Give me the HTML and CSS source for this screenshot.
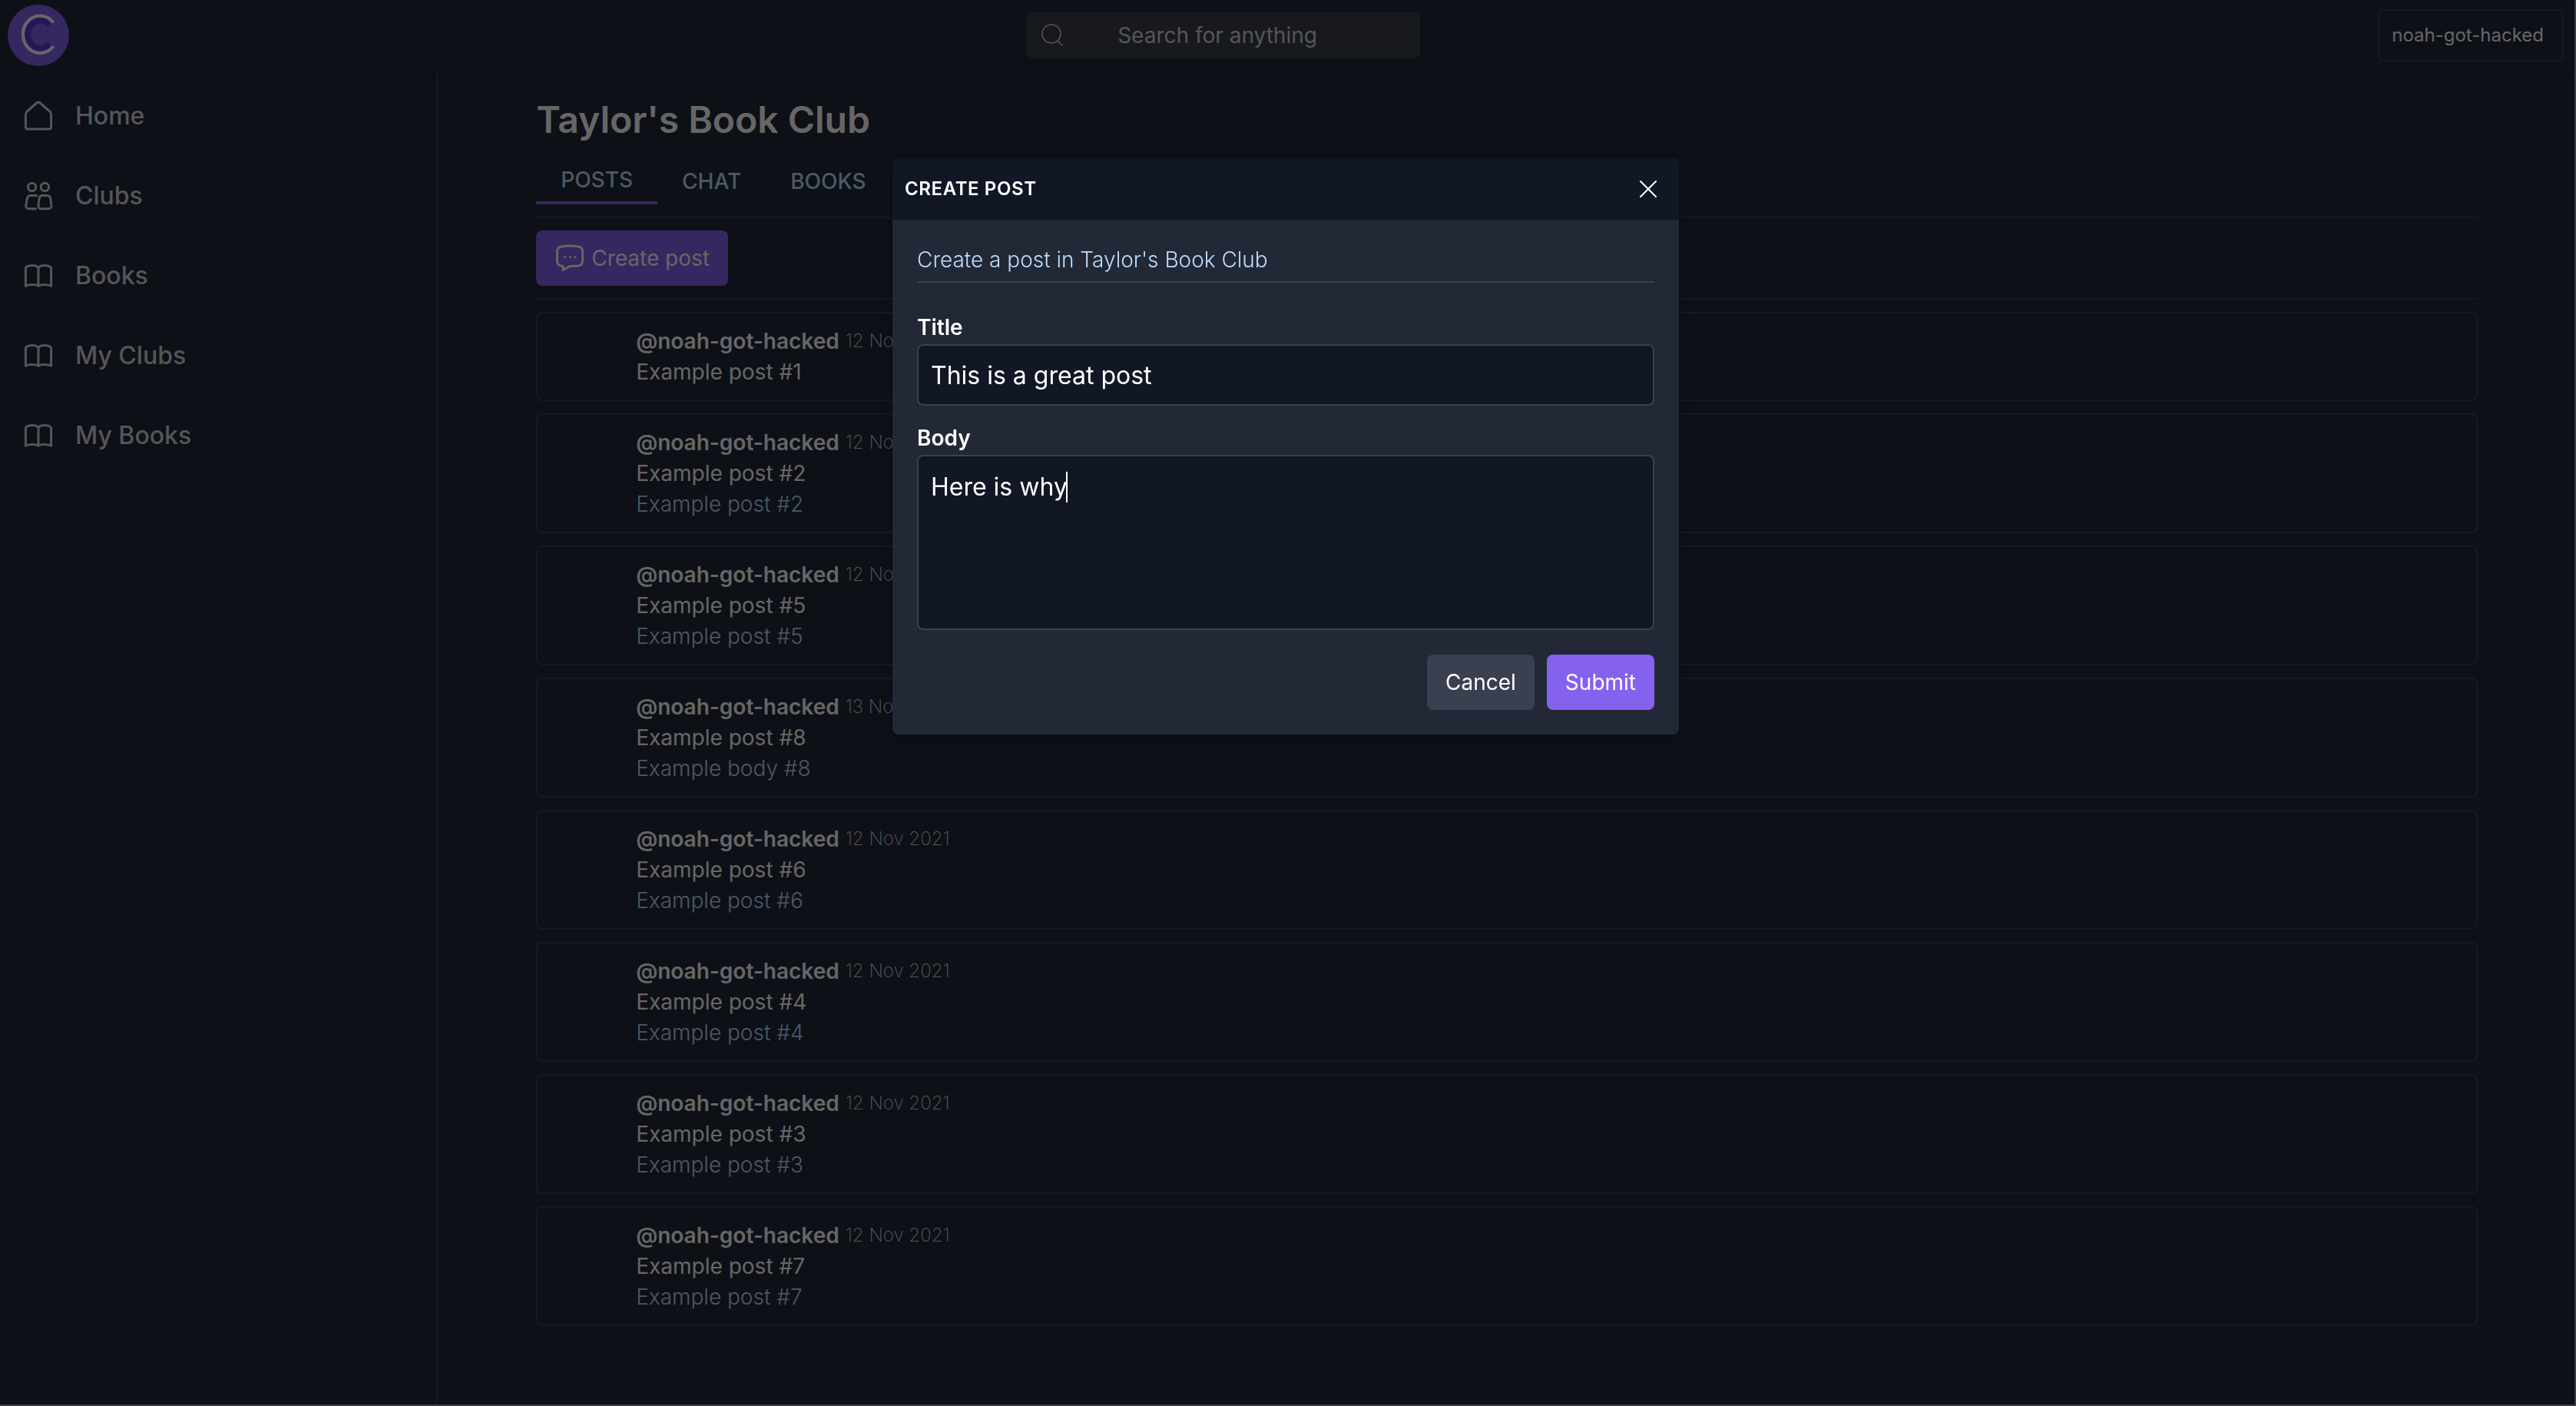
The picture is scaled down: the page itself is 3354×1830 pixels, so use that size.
FILE: index.html
```html
<!DOCTYPE html>
<html lang="en">
<head>
<meta charset="utf-8">
<title>Taylor's Book Club</title>
<link rel="stylesheet" href="styles.css">
</head>
<body>
<svg width="0" height="0" class="sprite" aria-hidden="true">
  <symbol id="i-book" viewBox="0 0 24 24"><path d="M12 6.600C11 5.600 9.600 5.200 8 5.200S3.700 5.800 3.700 7.200V18.600C5 18 6.400 17.800 8 17.800S11 18 12 18.600C13 18 14.400 17.800 16 17.800S19 18 20.300 18.600V7.200C20.300 5.800 17.600 5.200 16 5.200S13 5.600 12 6.600zM12 6.600V18.600"/></symbol>
</svg>
<div class="page">
  <header class="topbar">
    <a class="logo" href="#" aria-label="Club home">
      <svg viewBox="0 0 80 80"><circle cx="40" cy="40" r="40" fill="#8462ee" stroke="none"/><path d="M54.500 26.800A16.300 18.200 0 1 0 54.500 50.800" fill="none" stroke="#6932dc" stroke-width="8"/><path d="M59.500 23.500A22.300 24.200 0 1 0 59.500 54" fill="none" stroke="#fff" stroke-width="4.300"/></svg>
    </a>
    <label class="search">
      <svg viewBox="0 0 32 32"><circle cx="14" cy="14" r="12"/><path d="M22 23l6 6"/></svg>
      <input type="search" placeholder="Search for anything" aria-label="Search for anything">
    </label>
    <button class="user" type="button">noah-got-hacked</button>
  </header>
  <div class="columns">
    <nav class="sidebar">
      <a href="#"><svg viewBox="0 0 24 24"><path d="M3.700 11.100c0-.9.300-1.500.9-2.100L10.900 3.500c.6-.6 1.600-.6 2.200 0L19.400 9c.6.6.9 1.200.9 2.100v8c0 .8-.6 1.400-1.400 1.400H5.100c-.8 0-1.400-.6-1.400-1.400z"/></svg>Home</a>
      <a href="#"><svg viewBox="0 0 24 24"><circle cx="7.800" cy="6.200" r="2.600"/><circle cx="16.200" cy="6.200" r="2.600"/><path d="M10.800 11.800H7c-1.300 0-2.200.8-2.400 2.100L3.900 18.200c-.2 1.300.6 2.200 1.900 2.200H10.200M14.600 11.800h3.200c1.200 0 1.900.7 2.100 1.900l.5 4.500c.1 1.300-.5 2.200-1.800 2.200h-4.800c-1.300 0-1.900-.9-1.800-2.200l.5-4.500c.2-1.200.9-1.900 2.100-1.900z"/></svg>Clubs</a>
      <a href="#"><svg><use href="#i-book"/></svg>Books</a>
      <a href="#"><svg><use href="#i-book"/></svg>My Clubs</a>
      <a href="#"><svg><use href="#i-book"/></svg>My Books</a>
    </nav>
    <main class="content">
      <h1>Taylor's Book Club</h1>
      <nav class="tabs">
        <a class="active" href="#">POSTS</a>
        <a href="#">CHAT</a>
        <a href="#">BOOKS</a>
      </nav>
      <div class="toolbar">
        <button class="btn create" type="button">
          <svg viewBox="0 0 40 40"><path d="M8.500 5Q20 3 31.500 5Q36.500 6 36.500 11v13Q36.500 29 31 30Q24 30 20 30.500Q15 33 11 35.500V30.500Q3.500 30 3.500 24V11Q3.500 6 8.500 5z"/><path d="M13.500 18.500h.1M20.500 18.500h.1M27 18.500h.1"/></svg>
          Create post
        </button>
      </div>
      <section class="posts">
        <article class="post"><p class="by"><b>@noah-got-hacked</b> <time>12 Nov 2021</time></p><h2>Example post #1</h2></article>
        <article class="post"><p class="by"><b>@noah-got-hacked</b> <time>12 Nov 2021</time></p><h2>Example post #2</h2><p class="text">Example post #2</p></article>
        <article class="post"><p class="by"><b>@noah-got-hacked</b> <time>12 Nov 2021</time></p><h2>Example post #5</h2><p class="text">Example post #5</p></article>
        <article class="post"><p class="by"><b>@noah-got-hacked</b> <time>13 Nov 2021</time></p><h2>Example post #8</h2><p class="text">Example body #8</p></article>
        <article class="post"><p class="by"><b>@noah-got-hacked</b> <time>12 Nov 2021</time></p><h2>Example post #6</h2><p class="text">Example post #6</p></article>
        <article class="post"><p class="by"><b>@noah-got-hacked</b> <time>12 Nov 2021</time></p><h2>Example post #4</h2><p class="text">Example post #4</p></article>
        <article class="post"><p class="by"><b>@noah-got-hacked</b> <time>12 Nov 2021</time></p><h2>Example post #3</h2><p class="text">Example post #3</p></article>
        <article class="post"><p class="by"><b>@noah-got-hacked</b> <time>12 Nov 2021</time></p><h2>Example post #7</h2><p class="text">Example post #7</p></article>
      </section>
    </main>
  </div>
</div>
<div class="backdrop">
  <div class="modal" role="dialog" aria-labelledby="modal-title">
    <div class="modal-head">
      <h2 id="modal-title">CREATE POST</h2>
      <button class="close" type="button" aria-label="Close"><svg viewBox="0 0 48 48"><path d="M14 14l20 20M34 14L14 34"/></svg></button>
    </div>
    <form class="modal-body">
      <p class="intro">Create a post in Taylor's Book Club</p>
      <div class="field">
        <label for="title">Title</label>
        <input id="title" type="text" value="This is a great post">
      </div>
      <div class="field">
        <label for="body">Body</label>
        <div class="editor"><textarea id="body">Here is why</textarea><span class="caret"></span></div>
      </div>
      <div class="actions">
        <button class="btn cancel" type="button">Cancel</button>
        <button class="btn submit" type="submit">Submit</button>
      </div>
    </form>
  </div>
</div>
</body>
</html>
```
FILE: styles.css
```css
* { box-sizing: border-box; margin: 0; }

:root {
  --deep: #111725;
  --page: #212839;
  --surface: #222835;
  --line: #3a404f;
  --accent: #8462ee;
  --soft: #d1d5db;
  --blue: #bfdbfe;
}

body {
  background: var(--page);
  color: #fff;
  font: 400 28px/40px Inter, "Liberation Sans", sans-serif;
}

button, input, textarea { font: inherit; color: inherit; }
button { cursor: pointer; }
a { color: inherit; text-decoration: none; }
svg { display: block; flex: none; fill: none; stroke: currentColor; stroke-linecap: round; stroke-linejoin: round; }
.sprite { position: absolute; }

.page { display: flex; flex-direction: column; min-height: 100vh; }

.topbar {
  position: relative;
  display: flex;
  align-items: center;
  justify-content: space-between;
  padding: 6px 16px 6px 10px;
  border-bottom: 2px solid var(--page);
  box-shadow: 0 2px 6px rgba(0, 0, 0, .1);
}
.logo svg { width: 80px; height: 80px; stroke-linecap: butt; }

.search {
  display: flex;
  align-items: center;
  width: 512px;
  height: 60px;
  padding-left: 18px;
  border-radius: 8px;
  background: var(--line);
  color: var(--soft);
}
.search svg { width: 32px; height: 32px; stroke-width: 1.5; }
.search input {
  flex: 1;
  min-width: 0;
  padding: 0 0 0 68px;
  border: 0;
  outline: 0;
  background: none;
}
.search input::placeholder { color: inherit; opacity: 1; }

.user {
  height: 68px;
  padding: 0 24px 0 16px;
  border: 2px solid var(--line);
  border-radius: 8px;
  background: none;
  font-size: 24px;
}

.columns { display: flex; flex: 1; }

.sidebar {
  width: 17%;
  padding-top: 5px;
  border-right: 2px solid var(--line);
  color: var(--soft);
  font-size: 32px;
  font-weight: 500;
}
.sidebar a { display: flex; align-items: center; gap: 24px; height: 104px; padding-left: 26px; }
.sidebar svg { width: 48px; height: 48px; stroke-width: 1.5; }

.content { flex: 1; padding: 30px 128px 32px; }
h1 { font-size: 48px; line-height: 64px; font-weight: 600; margin-bottom: 18px; }

.tabs {
  display: flex;
  align-items: center;
  padding-bottom: 16px;
  border-bottom: 2px solid var(--line);
  color: var(--blue);
  font-weight: 500;
}
.tabs a { padding: 8px 32px; }
.tabs .active { border-bottom: 4px solid var(--accent); }

.toolbar { padding: 16px 0; border-bottom: 2px solid var(--line); }

.btn { height: 72px; padding: 0 24px; border: 0; border-radius: 8px; }
.create { display: flex; align-items: center; gap: 8px; background: var(--accent); }
.create svg { width: 40px; height: 40px; stroke-width: 3; }

.posts { display: flex; flex-direction: column; gap: 16px; padding-top: 16px; }
.post { padding: 16px 16px 16px 128px; border: 2px solid var(--line); border-radius: 8px; }
.post h2 { font-size: 28px; font-weight: 400; }
.by { display: flex; align-items: center; gap: 8px; }
.by b { font-weight: 600; }
.by time { color: var(--soft); font-size: 24px; font-weight: 200; }
.text { color: var(--blue); font-weight: 300; }

.backdrop {
  position: fixed;
  inset: 0;
  padding: 206px 4px 0 0;
  background: rgba(0, 0, 0, .6);
  border-right: 2px solid #3a3c42;
  border-bottom: 2px solid #3a3c42;
}
.modal {
  width: 1024px;
  margin: 0 auto;
  border-radius: 8px;
  background: var(--surface);
  box-shadow: 0 8px 24px rgba(0, 0, 0, .2);
}
.modal-head {
  display: flex;
  align-items: center;
  justify-content: space-between;
  height: 80px;
  padding: 0 16px;
  border-radius: 8px 8px 0 0;
  background: var(--deep);
}
.modal-head h2 { font-size: 24px; font-weight: 600; letter-spacing: .025em; }
.close { padding: 0; border: 0; background: none; }
.close svg { width: 48px; height: 48px; stroke-width: 2; }

.modal-body { padding: 32px; }
.intro { margin-bottom: 36px; padding-bottom: 8px; border-bottom: 2px solid var(--line); color: var(--blue); font-weight: 300; }
.field { margin-bottom: 20px; }
.field label { display: block; font-weight: 600; line-height: 44px; }
.field input, .field textarea {
  display: block;
  width: 100%;
  padding: 16px;
  border: 2px solid var(--line);
  border-radius: 8px;
  outline: 0;
  background: var(--deep);
  font-size: 32px;
  line-height: 48px;
  resize: none;
}
.field input { height: 80px; }
.field textarea { height: 228px; }
.editor { position: relative; }
.caret { position: absolute; left: 194px; top: 22px; width: 2px; height: 40px; background: #fff; }

.actions { display: flex; justify-content: flex-end; gap: 16px; padding-top: 12px; }
.cancel { background: var(--line); }
.submit { background: var(--accent); }
```
